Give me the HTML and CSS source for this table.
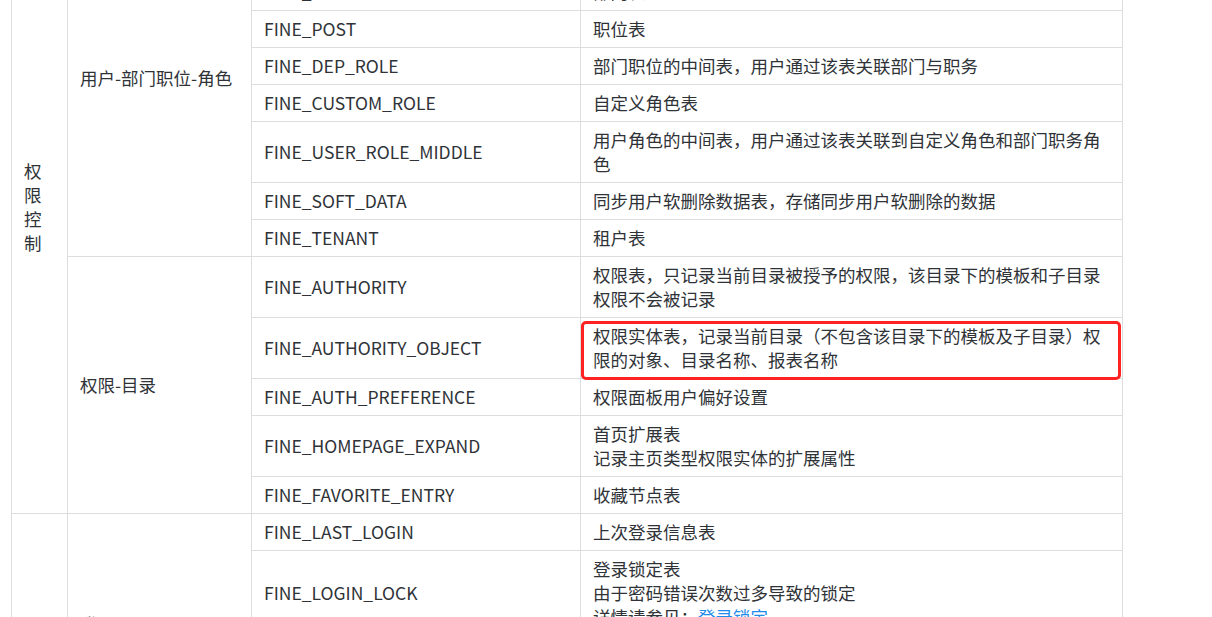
FILE: index.html
```html
<!DOCTYPE html>
<html lang="zh-CN">
<head>
    <meta charset="UTF-8">
    <title>FineDB 表结构</title>
    <link rel="stylesheet" href="styles.css">
</head>
<body>
    <table class="db-table">
        <colgroup>
            <col class="c-cat">
            <col class="c-group">
            <col class="c-name">
            <col class="c-desc">
        </colgroup>
        <tbody>
            <!-- 权限控制 -->
            <tr>
                <td class="cat" rowspan="14">权限控制</td>
                <td class="group" rowspan="9">用户-部门职位-角色</td>
                <td>FINE_USER</td>
                <td>用户表</td>
            </tr>
            <tr><td>FINE_EXTRA_PROPERTY</td><td>用户扩展属性表</td></tr>
            <tr><td>FINE_DEP</td><td>部门表</td></tr>
            <tr><td>FINE_POST</td><td>职位表</td></tr>
            <tr><td>FINE_DEP_ROLE</td><td>部门职位的中间表，用户通过该表关联部门与职务</td></tr>
            <tr><td>FINE_CUSTOM_ROLE</td><td>自定义角色表</td></tr>
            <tr><td>FINE_USER_ROLE_MIDDLE</td><td>用户角色的中间表，用户通过该表关联到自定义角色和部门职务角色</td></tr>
            <tr><td>FINE_SOFT_DATA</td><td>同步用户软删除数据表，存储同步用户软删除的数据</td></tr>
            <tr><td>FINE_TENANT</td><td>租户表</td></tr>
            <tr>
                <td class="group" rowspan="5">权限-目录</td>
                <td>FINE_AUTHORITY</td>
                <td>权限表，只记录当前目录被授予的权限，该目录下的模板和子目录权限不会被记录</td>
            </tr>
            <tr>
                <td>FINE_AUTHORITY_OBJECT</td>
                <td class="marked">权限实体表，记录当前目录（不包含该目录下的模板及子目录）权限的对象、目录名称、报表名称</td>
            </tr>
            <tr><td>FINE_AUTH_PREFERENCE</td><td>权限面板用户偏好设置</td></tr>
            <tr><td>FINE_HOMEPAGE_EXPAND</td><td>首页扩展表<br>记录主页类型权限实体的扩展属性</td></tr>
            <tr><td>FINE_FAVORITE_ENTRY</td><td>收藏节点表</td></tr>

            <!-- 系统 -->
            <tr>
                <td class="cat" rowspan="8">系统管理</td>
                <td class="group" rowspan="4">登录</td>
                <td>FINE_LAST_LOGIN</td>
                <td>上次登录信息表</td>
            </tr>
            <tr>
                <td>FINE_LOGIN_LOCK</td>
                <td>登录锁定表<br>由于密码错误次数过多导致的锁定<br>详情请参见：<a href="#">登录锁定</a></td>
            </tr>
            <tr><td>FINE_BLOCK_IP</td><td>IP 锁定表<br>记录被锁定的 IP 地址</td></tr>
            <tr><td>FINE_REMEMBER_LOGIN</td><td>记住登录状态表</td></tr>
            <tr>
                <td class="group" rowspan="4">系统配置</td>
                <td>FINE_CONF_ENTITY</td>
                <td>配置信息表</td>
            </tr>
            <tr><td>FINE_CONF_CLASSNAME</td><td>配置类名表</td></tr>
            <tr><td>FINE_CONF_XMLENTITY</td><td>XML 配置信息表</td></tr>
            <tr><td>FINE_SYSTEM_LOG</td><td>系统日志表</td></tr>
        </tbody>
    </table>
</body>
</html>
```

FILE: styles.css
```css
html, body {
    margin: 0;
    padding: 0;
    background: #fff;
    overflow: hidden;
}
body {
    height: 617px;
    padding-left: 11px;
    font-family: "Noto Sans CJK SC", "Noto Sans", sans-serif;
    font-size: 17.5px;
    line-height: 24px;
    color: #2f3338;
}
.db-table {
    margin-top: -101px;
    width: 1111px;
    table-layout: fixed;
    border-collapse: collapse;
}
.c-cat { width: 56px; }
.c-group { width: 184px; }
.c-name { width: 329px; }
.c-desc { width: 542px; }
.db-table td {
    border: 1px solid #dddddd;
    padding: 6px 12px;
    vertical-align: middle;
    text-align: left;
}
.db-table .cat {
    word-break: break-all;
}
.db-table a {
    color: #1f8ceb;
    text-decoration: none;
}
.marked {
    position: relative;
}
.marked::after {
    content: "";
    position: absolute;
    top: 3px;
    left: 0;
    right: 1px;
    bottom: -2px;
    border: 3px solid #ff2222;
    border-radius: 5px;
}
```
